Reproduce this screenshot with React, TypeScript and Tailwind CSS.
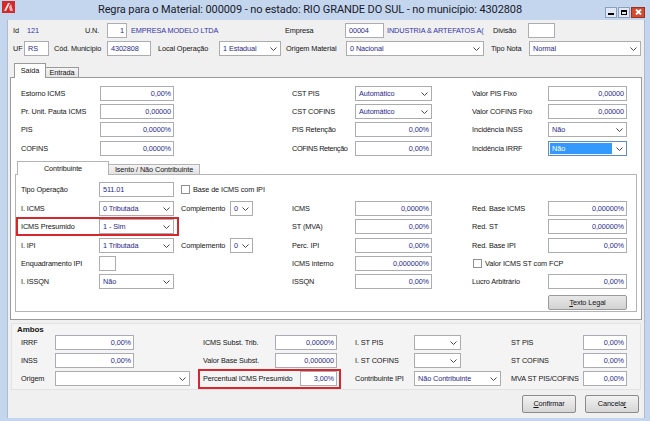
import React from "react";

const Chevron = () => (
  <svg width="7" height="4" viewBox="0 0 7 4" className="shrink-0">
    <polyline points="0.5,0.5 3.5,3.5 6.5,0.5" fill="none" stroke="#4a4a4a" strokeWidth="1" />
  </svg>
);

function L({ w, children, cls = "" }: { w: string; children?: React.ReactNode; cls?: string }) {
  return <span className={`${w} shrink-0 whitespace-nowrap ${cls}`}>{children}</span>;
}

function Inp({ w, v = "", left = false }: { w: string; v?: string; left?: boolean }) {
  return (
    <div
      className={`${w} h-[15px] shrink-0 bg-white border border-[#abadb3] flex items-center whitespace-nowrap overflow-hidden text-[#2a2a8c] ${
        left ? "justify-start pl-[3px]" : "justify-end pr-[2px]"
      }`}
    >
      {v}
    </div>
  );
}

function Sel({ w, v = "" }: { w: string; v?: string }) {
  return (
    <div className={`${w} h-[15px] shrink-0 bg-white border border-[#acacac] flex items-center justify-between pl-[3px] pr-[3px] text-[#2a2a8c] whitespace-nowrap overflow-hidden`}>
      <span>{v}</span>
      <Chevron />
    </div>
  );
}

function Check() {
  return <div className="w-[9px] h-[9px] shrink-0 border border-[#8f8f8f] bg-white" />;
}

function Btn({ w, children }: { w: string; children: React.ReactNode }) {
  return (
    <div className={`${w} h-[18px] shrink-0 rounded-[2px] border border-[#8a8a8a] bg-gradient-to-b from-[#f2f2f2] to-[#d6d6d6] flex items-center justify-center text-[#111]`}>
      {children}
    </div>
  );
}

function TitleBar() {
  return (
    <div className="h-[20px] shrink-0 flex items-center relative">
      <svg width="13" height="12" viewBox="0 0 13 12" className="ml-[2px] mb-[6px] shrink-0">
        <rect x="0" y="0" width="13" height="12" fill="#d4282b" />
        <polygon points="2,10 6,2 8,2 4,10" fill="#fff" opacity="0.9" />
        <polygon points="7,6 9,3 11,10 8,10" fill="#f4b3b3" />
      </svg>
      <div className="flex-1 text-center text-[11px] tracking-[-0.1px] text-[#1a1a2a] font-['Roboto',sans-serif] whitespace-nowrap -mt-[1px]">
        Regra para o Material: 000009 - no estado: RIO GRANDE DO SUL - no município: 4302808
      </div>
      <div className="flex items-center gap-[1px] mr-[5px] mt-[4px]">
        <div className="w-[12px] h-[11px] bg-[#dfe8f4] border border-[#8aa0bd] flex items-end justify-center pb-[2px]">
          <div className="w-[6px] h-[2px] bg-black" />
        </div>
        <div className="w-[12px] h-[11px] bg-[#dfe8f4] border border-[#8aa0bd] flex items-center justify-center">
          <div className="w-[6px] h-[5px] border-[1.5px] border-black border-t-2" />
        </div>
        <div className="w-[14px] h-[11px] bg-[#d24b33] border border-[#9a3020] flex items-center justify-center">
          <svg width="7" height="6" viewBox="0 0 7 6">
            <path d="M1 0.5 L6 5.5 M6 0.5 L1 5.5" stroke="#fff" strokeWidth="1.8" />
          </svg>
        </div>
      </div>
    </div>
  );
}

export default function App() {
  return (
    <div className="w-[650px] h-[421px] bg-[#c3d6ee] flex flex-col font-['Liberation_Sans',Arial,sans-serif] text-[7.3px] tracking-[-0.1px] leading-none text-[#141414] overflow-hidden">
      <TitleBar />
      <div className="ml-[7px] mr-[5px] h-[398px] shrink-0 bg-[#f0f0f0] border-l border-r border-[#a9bcd4] flex flex-col pt-[3px]">
        {/* Row 1 */}
        <div className="h-[15px] flex items-center pl-[5px]">
          <L w="w-[14px]">Id</L>
          <L w="w-[58px]" cls="text-[#3535a5]">121</L>
          <L w="w-[22px]">U.N.</L>
          <Inp w="w-[20px]" v="1" />
          <L w="w-[158px]" cls="pl-[4px] text-[#3535a5]">EMPRESA MODELO LTDA</L>
          <L w="w-[60px]">Empresa</L>
          <Inp w="w-[39px]" v="00004" left />
          <L w="w-[109px]" cls="pl-[3px] text-[#3535a5]">INDUSTRIA &amp; ARTEFATOS A(</L>
          <L w="w-[35px]">Divisão</L>
          <Inp w="w-[27px]" />
        </div>
        {/* Row 2 */}
        <div className="h-[15px] mt-[3px] flex items-center pl-[5px]">
          <L w="w-[11px]">UF</L>
          <Inp w="w-[25px]" v="RS" left />
          <L w="w-[58px]" cls="pl-[5px]">Cód. Município</L>
          <Inp w="w-[44px]" v="4302808" left />
          <L w="w-[68px]" cls="pl-[7px]">Local Operação</L>
          <Sel w="w-[62px]" v="1 Estadual" />
          <L w="w-[65px]" cls="pl-[5px]">Origem Material</L>
          <Sel w="w-[138px]" v="0 Nacional" />
          <L w="w-[45px]" cls="pl-[7px]">Tipo Nota</L>
          <Sel w="w-[112px]" v="Normal" />
        </div>

        {/* Outer tabs */}
        <div className="mt-[7px] ml-[2px] w-[632px] flex flex-col">
          <div className="h-[14px] flex items-end pl-[4px] relative z-10">
            <div className="w-[32px] h-[15px] -mb-px bg-white border border-b-0 border-[#9a9a9a] flex items-center justify-center">Saída</div>
            <div className="w-[33px] h-[10px] bg-gradient-to-b from-[#f4f4f4] to-[#e3e3e3] border border-b-0 border-l-0 border-[#9a9a9a] flex items-center justify-center">Entrada</div>
          </div>
          <div className="h-[243px] border border-[#9a9a9a] bg-white pt-[8px] flex flex-col">
            {[
              ["Estorno ICMS", "0,00%", "CST PIS", "sel:Automático", "Valor PIS Fixo", "0,00000"],
              ["Pr. Unit. Pauta ICMS", "0,00000", "CST COFINS", "sel:Automático", "Valor COFINS Fixo", "0,00000"],
              ["PIS", "0,0000%", "PIS Retenção", "0,00%", "Incidência INSS", "sel:Não"],
              ["COFINS", "0,0000%", "COFINS Retenção", "0,00%", "Incidência IRRF", "focus:Não"],
            ].map((r, i) => (
              <div key={i} className={`h-[15px] flex items-center pl-[10px] ${i === 0 ? "" : i === 3 ? "mt-[4px]" : "mt-[3px]"}`}>
                <L w="w-[79px]">{r[0]}</L>
                <Inp w="w-[74px]" v={r[1]} />
                <div className="w-[118px] shrink-0" />
                <L w="w-[63px]" cls={i === 3 ? "tracking-[-0.35px]" : ""}>{r[2]}</L>
                {r[3].startsWith("sel:") ? <Sel w="w-[77px]" v={r[3].slice(4)} /> : <Inp w="w-[77px]" v={r[3]} />}
                <div className="w-[40px] shrink-0" />
                <L w="w-[76px]">{r[4]}</L>
                {r[5].startsWith("sel:") ? (
                  <Sel w="w-[79px]" v={r[5].slice(4)} />
                ) : r[5].startsWith("focus:") ? (
                  <div className="w-[79px] h-[15px] shrink-0 bg-white border border-[#5a8fc4] flex items-center justify-between pl-[1px] pr-[3px]">
                    <div className="w-[62px] h-[11px] bg-[#3399ff] text-white flex items-center pl-[2px]">Não</div>
                    <Chevron />
                  </div>
                ) : (
                  <Inp w="w-[79px]" v={r[5]} />
                )}
              </div>
            ))}

            {/* Inner tabs */}
            <div className="mt-[5px] ml-[4px] w-[622px] flex flex-col">
              <div className="h-[13px] flex items-end pl-[2px] relative z-10">
                <div className="w-[92px] h-[14px] -mb-px bg-white border border-b-0 border-[#b4b4b4] flex items-center justify-center">Contribuinte</div>
                <div className="w-[91px] h-[10px] bg-gradient-to-b from-[#f4f4f4] to-[#e3e3e3] border border-b-0 border-l-0 border-[#b4b4b4] flex items-center justify-center">Isento / Não Contribuinte</div>
              </div>
              <div className="h-[138px] border border-[#b4b4b4] bg-white pt-[7px] flex flex-col">
                {/* Tipo Operação */}
                <div className="h-[15px] flex items-center pl-[5px]">
                  <L w="w-[78px]">Tipo Operação</L>
                  <Inp w="w-[75px]" v="511.01" left />
                  <div className="w-[7px] shrink-0" />
                  <Check />
                  <L w="w-[100px]" cls="pl-[3px]">Base de ICMS com IPI</L>
                </div>
                {/* I. ICMS */}
                <div className="h-[15px] mt-[4px] flex items-center pl-[5px]">
                  <L w="w-[78px]">I. ICMS</L>
                  <Sel w="w-[75px]" v="0 Tributada" />
                  <L w="w-[56px]" cls="pl-[7px]">Complemento</L>
                  <Sel w="w-[23px]" v="0" />
                  <div className="w-[39px] shrink-0" />
                  <L w="w-[63px]">ICMS</L>
                  <Inp w="w-[77px]" v="0,0000%" />
                  <div className="w-[40px] shrink-0" />
                  <L w="w-[76px]">Red. Base ICMS</L>
                  <Inp w="w-[79px]" v="0,00000%" />
                </div>
                {/* ICMS Presumido */}
                <div className="h-[15px] mt-[3px] flex items-center pl-[5px] relative">
                  <div className="absolute left-0 top-[-2px] w-[163px] h-[19px] border-2 border-[#d9252c]" />
                  <L w="w-[78px]">ICMS Presumido</L>
                  <Sel w="w-[75px]" v="1 - Sim" />
                  <div className="w-[118px] shrink-0" />
                  <L w="w-[63px]">ST (MVA)</L>
                  <Inp w="w-[77px]" v="0,00%" />
                  <div className="w-[40px] shrink-0" />
                  <L w="w-[76px]">Red. ST</L>
                  <Inp w="w-[79px]" v="0,00000%" />
                </div>
                {/* I. IPI */}
                <div className="h-[15px] mt-[4px] flex items-center pl-[5px]">
                  <L w="w-[78px]">I. IPI</L>
                  <Sel w="w-[75px]" v="1 Tributada" />
                  <L w="w-[56px]" cls="pl-[7px]">Complemento</L>
                  <Sel w="w-[23px]" v="0" />
                  <div className="w-[39px] shrink-0" />
                  <L w="w-[63px]">Perc. IPI</L>
                  <Inp w="w-[77px]" v="0,00%" />
                  <div className="w-[40px] shrink-0" />
                  <L w="w-[76px]">Red. Base IPI</L>
                  <Inp w="w-[79px]" v="0,00%" />
                </div>
                {/* Enquadramento */}
                <div className="h-[15px] mt-[3px] flex items-center pl-[5px]">
                  <L w="w-[78px]">Enquadramento IPI</L>
                  <Inp w="w-[17px]" />
                  <div className="w-[176px] shrink-0" />
                  <L w="w-[63px]">ICMS interno</L>
                  <Inp w="w-[77px]" v="0,000000%" />
                  <div className="w-[41px] shrink-0" />
                  <Check />
                  <L w="w-[100px]" cls="pl-[3px]">Valor ICMS ST com FCP</L>
                </div>
                {/* I. ISSQN */}
                <div className="h-[15px] mt-[3px] flex items-center pl-[5px]">
                  <L w="w-[78px]">I. ISSQN</L>
                  <Sel w="w-[75px]" v="Não" />
                  <div className="w-[118px] shrink-0" />
                  <L w="w-[63px]">ISSQN</L>
                  <Inp w="w-[77px]" v="0,00%" />
                  <div className="w-[40px] shrink-0" />
                  <L w="w-[76px]">Lucro Arbitrário</L>
                  <Inp w="w-[79px]" v="0,00%" />
                </div>
                {/* Texto Legal */}
                <div className="mt-[6px] flex justify-end pr-[9px]">
                  <div className="w-[79px] h-[15px] rounded-[2px] border border-[#9a9a9a] bg-gradient-to-b from-[#e8e8e8] to-[#d2d2d2] flex items-center justify-center">
                    <span><span className="underline">T</span>exto Legal</span>
                  </div>
                </div>
              </div>
            </div>
          </div>
        </div>

        {/* Ambos */}
        <div className="mt-[3px] ml-[3px] w-[630px] border border-[#e2e2e2] bg-[#f4f4f4] pb-[3px] flex flex-col">
          <div className="h-[11px] flex items-center pl-[5px] font-bold text-[8px]">Ambos</div>
          <div className="h-[15px] flex items-center pl-[9px]">
            <L w="w-[34px]">IRRF</L>
            <Inp w="w-[79px]" v="0,00%" />
            <L w="w-[72px]" cls="ml-[69px]">ICMS Subst. Trib.</L>
            <Inp w="w-[62px]" v="0,0000%" />
            <L w="w-[59px]" cls="ml-[18px]">I. ST PIS</L>
            <Sel w="w-[47px]" />
            <L w="w-[72px]" cls="ml-[50px]">ST PIS</L>
            <Inp w="w-[44px]" v="0,00%" />
          </div>
          <div className="h-[15px] mt-[3px] flex items-center pl-[9px]">
            <L w="w-[34px]">INSS</L>
            <Inp w="w-[79px]" v="0,00%" />
            <L w="w-[72px]" cls="ml-[69px]">Valor Base Subst.</L>
            <Inp w="w-[62px]" v="0,000000" />
            <L w="w-[59px]" cls="ml-[18px]">I. ST COFINS</L>
            <Sel w="w-[47px]" />
            <L w="w-[72px]" cls="ml-[50px]">ST COFINS</L>
            <Inp w="w-[44px]" v="0,00%" />
          </div>
          <div className="h-[15px] mt-[3px] flex items-center pl-[9px] relative">
            <div className="absolute left-[186px] top-[-2px] w-[143px] h-[20px] border-2 border-[#d9252c]" />
            <L w="w-[34px]">Origem</L>
            <Sel w="w-[135px]" />
            <L w="w-[97px]" cls="ml-[13px]">Percentual ICMS Presumido</L>
            <Inp w="w-[37px]" v="3,00%" />
            <L w="w-[59px]" cls="ml-[18px]">Contribuinte IPI</L>
            <Sel w="w-[87px]" v="Não Contribuinte" />
            <L w="w-[72px]" cls="ml-[10px]">MVA ST PIS/COFINS</L>
            <Inp w="w-[44px]" v="0,00%" />
          </div>
        </div>

        {/* Buttons */}
        <div className="mt-[5px] flex justify-end pr-[5px] gap-[9px]">
          <Btn w="w-[54px]">
            <span><span className="underline">C</span>onfirmar</span>
          </Btn>
          <Btn w="w-[54px]">
            <span>Cancela<span className="underline">r</span></span>
          </Btn>
        </div>
      </div>
    </div>
  );
}
